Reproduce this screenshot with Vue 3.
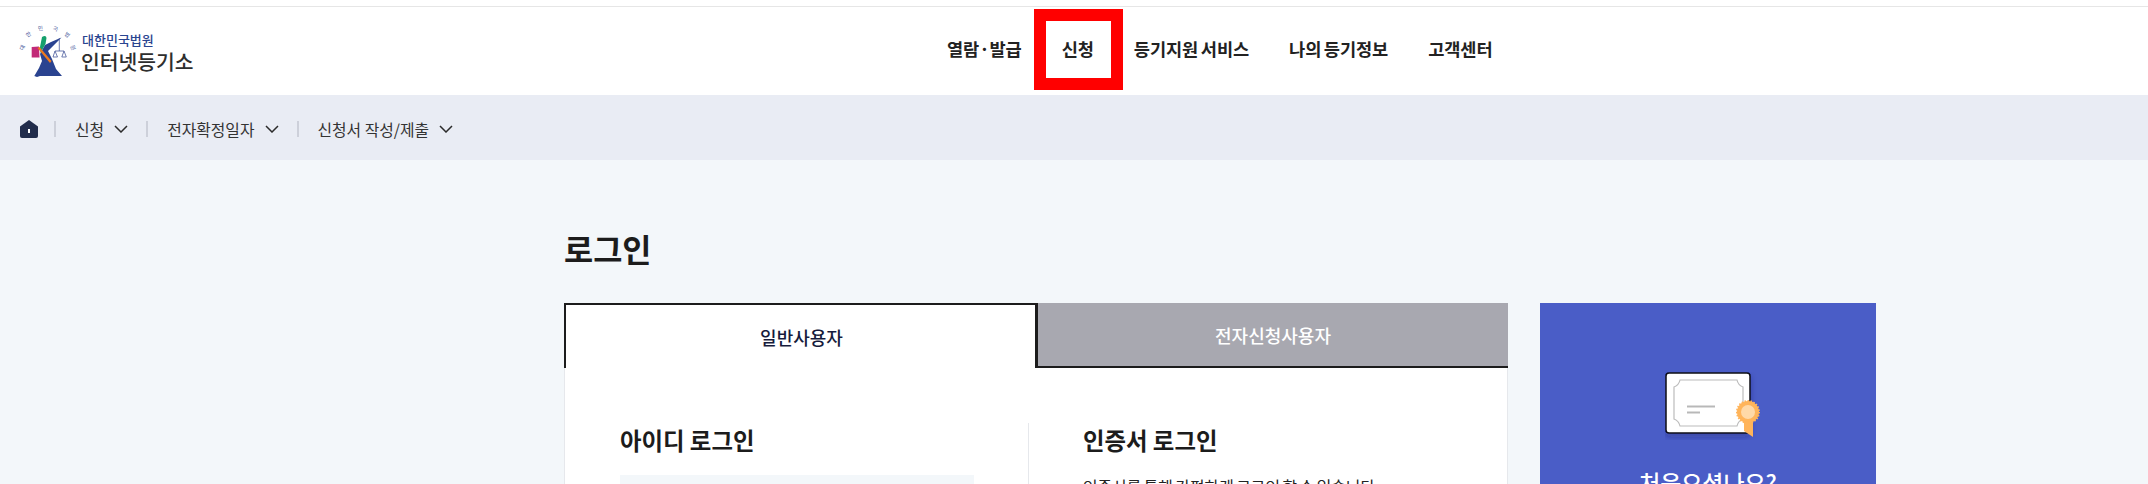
<template>
  <div class="page">
    <div class="top-line"></div>
    <header class="header">
      <a class="logo">
        <svg class="logo-mark" width="56" height="54" viewBox="0 0 56 54">
          <g class="seal" fill="#4a5a9c" font-size="5.5" text-anchor="middle">
            <text transform="translate(4 24.5) rotate(-65)">대</text>
            <text transform="translate(9.5 12) rotate(-35)">한</text>
            <text transform="translate(20.7 6.3) rotate(-8)">민</text>
            <text transform="translate(35 7) rotate(15)">국</text>
            <text transform="translate(46 12.3) rotate(40)">법</text>
            <text transform="translate(51 24.5) rotate(70)">원</text>
          </g>
          <path d="M11.7 23 L19 22.5 L19.5 33.5 L11.7 33.5 Z" fill="#c22a78" />
          <path d="M41.5 13.5 L31 18 L25 21 L20 30 L22 37 L19 44 L14.3 52 L17 53 L20 52 L42 52 L36 45 L32 35 L28 27 Z" fill="#2a4390" />
          <path d="M22 13 Q26 10.5 26.5 14 L25.5 20 L20.5 29 L20 23 Z" fill="#15a06c" />
          <path d="M17.5 24 L19.5 23 L31.5 37 L30 39 Z" fill="#ee7a1f" />
          <g fill="none" stroke="#4a5a9c" stroke-width="0.8">
            <path d="M39.3 14 V27" />
            <path d="M35 27 H44" />
            <path d="M35 27 L33 33 H37.5 Z" />
            <path d="M44 27 L41.8 33 H46.3 Z" />
          </g>
        </svg>
        <span class="logo-text">
          <span class="logo-sub">대한민국법원</span>
          <span class="logo-main">인터넷등기소</span>
        </span>
      </a>
      <nav class="gnb">
        <a v-for="item in menus" :key="item.label" class="gnb-item" :class="{ marked: item.marked }">{{ item.label }}</a>
      </nav>
    </header>

    <div class="crumbs">
      <svg class="home" width="18" height="18" viewBox="0 0 18 18">
        <path d="M9 0 L18 6.5 V16 Q18 18 16 18 H2 Q0 18 0 16 V6.5 Z" fill="#212c4b" />
        <rect x="8" y="9" width="2" height="4" fill="#fff" />
      </svg>
      <template v-for="c in crumbs" :key="c">
        <i class="sep"></i>
        <span class="crumb">
          {{ c }}
          <svg width="14" height="8" viewBox="0 0 14 8"><path d="M1 1 L7 7 L13 1" fill="none" stroke="#2b2b2b" stroke-width="1.5" /></svg>
        </span>
      </template>
    </div>

    <main class="content">
      <div class="left">
        <h1 class="title">로그인</h1>
        <div class="tabs">
          <div class="tab on">일반사용자</div>
          <div class="tab off">전자신청사용자</div>
        </div>
        <div class="panel">
          <section class="col id-col">
            <h2>아이디 로그인</h2>
            <div class="input"></div>
          </section>
          <section class="col cert-col">
            <h2>인증서 로그인</h2>
            <p>인증서를 통해 간편하게 로그인 할 수 있습니다.</p>
          </section>
        </div>
      </div>
      <aside class="promo">
        <svg class="cert" width="98" height="68" viewBox="0 0 98 68">
          <defs>
            <filter id="sh" x="-20%" y="-20%" width="140%" height="150%">
              <feDropShadow dx="0" dy="3" stdDeviation="3" flood-color="#1a2468" flood-opacity=".35" />
            </filter>
          </defs>
          <rect x="1" y="1" width="84" height="60" rx="3" fill="#fff" stroke="#0c0c14" stroke-width="1.5" filter="url(#sh)" />
          <path d="M15 8 H72 Q73 13 78 15 V47 Q73 49 72 54 H15 Q14 49 9 47 V15 Q14 13 15 8 Z" fill="none" stroke="#bcbcbc" stroke-width="1.2" />
          <path d="M22 34.5 H50" stroke="#b8b8b8" stroke-width="2" />
          <path d="M22 40.5 H35" stroke="#b8b8b8" stroke-width="2" />
          <path d="M79 48 L88 48 L88 65 L79 59 Z" fill="#ffb45a" />
          <circle cx="83" cy="40" r="11" fill="#ffb45a" stroke="#ffb45a" stroke-width="2" stroke-dasharray="1.5 1.5" />
          <circle cx="83" cy="40" r="7" fill="#ffd9a8" />
        </svg>
        <div class="promo-title">처음오셨나요?</div>
      </aside>
    </main>
  </div>
</template>

<script setup>
const menus = [
  { label: '열람·발급' },
  { label: '신청', marked: true },
  { label: '등기지원 서비스' },
  { label: '나의 등기정보' },
  { label: '고객센터' },
]
const crumbs = ['신청', '전자확정일자', '신청서 작성/제출']
</script>

<style>
html, body {
  margin: 0;
  background: #f3f7fa;
  overflow: hidden;
}
</style>

<style scoped>
.page {
  height: 484px;
  overflow: hidden;
  font-family: "Noto Sans CJK KR", "Noto Sans", sans-serif;
  color: #222;
}

.top-line {
  height: 7px;
  background: #fff;
  border-bottom: 1px solid #e6e6e6;
  box-sizing: border-box;
}

.header {
  height: 88px;
  background: #fff;
  display: flex;
  align-items: center;
  padding-left: 20px;
}

.logo {
  width: 175px;
  display: flex;
  align-items: center;
  gap: 5px;
}

.logo-mark {
  overflow: visible;
}

.seal {
  font-family: "Noto Sans CJK KR", sans-serif;
}

.logo-text {
  display: flex;
  flex-direction: column;
  margin-top: 4px;
}

.logo-sub {
  font-size: 13px;
  line-height: 16px;
  font-weight: 500;
  color: #2a4590;
  margin-left: 1px;
}

.logo-main {
  font-size: 20.4px;
  line-height: 26px;
  font-weight: 500;
  color: #2e2e2e;
  white-space: nowrap;
}

.gnb {
  display: flex;
  margin-left: 732px;
}

.gnb-item {
  font-size: 17.6px;
  font-weight: 700;
  color: #222;
  padding: 0 20px;
  height: 80px;
  line-height: 76px;
  letter-spacing: -0.1px;
  word-spacing: -1.3px;
}

.gnb-item.marked {
  position: relative;
}

/* red mark laid over the item in the capture */
.gnb-item.marked::after {
  content: "";
  position: absolute;
  left: -8px;
  right: -9px;
  top: -2px;
  bottom: 1px;
  border: 12px solid #f00;
}

.crumbs {
  height: 65px;
  box-sizing: border-box;
  background: #e9ecf4;
  display: flex;
  align-items: center;
  padding: 3px 0 0 20px;
}

.home {
  margin-right: -3px;
}

.sep {
  width: 2px;
  height: 16px;
  background: #cdd0da;
  margin: 0 19px;
}

.crumb + .sep {
  margin-left: 18px;
}

.crumb {
  font-size: 15.84px;
  color: #333;
  display: flex;
  align-items: center;
  gap: 10px;
}

.content {
  display: flex;
  gap: 32px;
  padding-left: 564px;
}

.left {
  width: 944px;
}

.title {
  margin: 0;
  padding-top: 65px;
  font-size: 31.68px;
  line-height: 46px;
  font-weight: 700;
  color: #1c1c1c;
}

.tabs {
  display: flex;
  margin-top: 32px;
  height: 65px;
}

.tab {
  box-sizing: border-box;
  display: flex;
  align-items: center;
  justify-content: center;
  font-size: 18px;
  font-weight: 500;
}

.tab.on {
  width: 473px;
  background: #fff;
  color: #161b3c;
  border: 2px solid #1c1c1c;
  border-bottom: 0;
  padding-left: 2px;
}

.tab.off {
  width: 472px;
  background: #a8a8b0;
  color: #fff;
  border-bottom: 2px solid #1c1c1c;
  border-left: 2px solid #1c1c1c;
  margin-left: -1px;
}

.panel {
  display: flex;
  height: 200px;
  background: #fff;
  border-left: 1px solid #e6e8ec;
  border-right: 1px solid #e6e8ec;
  box-sizing: border-box;
  padding-top: 55px;
}

.col h2 {
  margin: 0;
  font-size: 23.4px;
  line-height: 34px;
  font-weight: 700;
  color: #1c1c1c;
}

.id-col {
  width: 464px;
  box-sizing: border-box;
  padding: 0 54px 0 55px;
  border-right: 1px solid #e6e8ec;
}

.input {
  height: 60px;
  margin-top: 18px;
  background: #f3f7fa;
}

.cert-col {
  padding-left: 54px;
}

.cert-col p {
  margin: 18px 0 0;
  font-size: 15.84px;
  word-spacing: -1px;
  color: #222;
}

.promo {
  margin-top: 143px;
  width: 336px;
  height: 200px;
  background: #4a5dc7;
  display: flex;
  flex-direction: column;
  align-items: center;
  padding-top: 69px;
}

.cert {
  margin-left: 12px;
}

.promo-title {
  margin-top: 25px;
  font-size: 22.88px;
  font-weight: 500;
  line-height: 34px;
  color: #fff;
}
</style>
